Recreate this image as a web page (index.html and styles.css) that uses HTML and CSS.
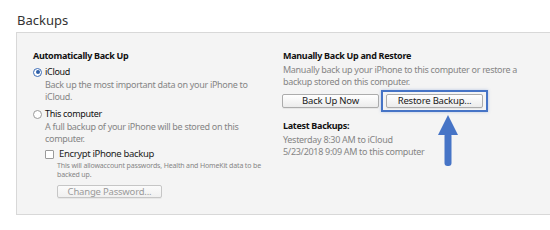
FILE: index.html
```html
<!DOCTYPE html>
<html>
<head>
<meta charset="utf-8">
<link rel="stylesheet" href="styles.css">
</head>
<body>
<div class="page">
  <h1 class="title">Backups</h1>
  <div class="panel">
    <div class="col">
      <div class="heading">Automatically Back Up</div>
      <div class="option"><span class="radio checked"></span><span class="label">iCloud</span></div>
      <p class="desc indent">Back up the most important data on your iPhone to<br>iCloud.</p>
      <div class="option second"><span class="radio"></span><span class="label">This computer</span></div>
      <p class="desc indent">A full backup of your iPhone will be stored on this<br>computer.</p>
      <div class="option check-row"><span class="checkbox"></span><span class="label big">Encrypt iPhone backup</span></div>
      <p class="small">This will allowaccount passwords, Health and HomeKit data to be<br>backed up.</p>
      <button class="btn disabled pw">Change Password...</button>
    </div>
    <div class="col right">
      <div class="heading">Manually Back Up and Restore</div>
      <p class="desc">Manually back up your iPhone to this computer or restore a<br>backup stored on this computer.</p>
      <div class="buttons">
        <button class="btn wide">Back Up Now</button>
        <div class="highlight">
          <button class="btn wide">Restore Backup...</button>
          <svg class="arrow" width="22" height="52" viewBox="0 0 22 52">
            <polygon points="11,0 21,20 1,20" fill="#4674c6"/>
            <rect x="7.5" y="18" width="7" height="33" rx="3" fill="#4674c6"/>
          </svg>
        </div>
      </div>
      <div class="heading latest">Latest Backups:</div>
      <p class="desc">Yesterday 8:30 AM to iCloud<br>5/23/2018 9:09 AM to this computer</p>
    </div>
  </div>
</div>
</body>
</html>
```
FILE: styles.css
```css
html, body {
  margin: 0;
  padding: 0;
  background: #ffffff;
}
.page {
  padding: 10px 14px 0 16px;
  font-family: "Noto Sans", "Open Sans", sans-serif;
  font-size: 9px;
  letter-spacing: -0.3px;
  color: #1a1a1a;
}
.title {
  margin: 0 0 0 1px;
  font-size: 13px;
  font-weight: normal;
  line-height: 20px;
  letter-spacing: 0;
  color: #333;
}
.panel {
  margin-top: 2px;
  width: 518px;
  height: 181px;
  box-sizing: content-box;
  border: 1px solid #d8d8d8;
  background: #f4f4f4;
  display: grid;
  grid-template-columns: 250px 1fr;
  padding: 0 0 0 16px;
}
.col {
  padding-top: 17px;
}
.heading {
  font-weight: bold;
  color: #111;
  line-height: 12px;
}
.option {
  display: flex;
  align-items: center;
  margin-top: 4px;
  line-height: 12px;
  color: #111;
}
.option.second {
  margin-top: 5px;
}
.radio {
  width: 7px;
  height: 7px;
  border: 1px solid #9a9a9a;
  border-radius: 50%;
  background: #fff;
  margin-right: 3px;
  display: flex;
  align-items: center;
  justify-content: center;
  box-sizing: content-box;
}
.radio.checked {
  border-color: #3b6bb5;
}
.radio.checked::after {
  content: "";
  width: 4px;
  height: 4px;
  border-radius: 50%;
  background: #2f5fa8;
}
.desc {
  margin: 1px 0 0 0;
  line-height: 12px;
  color: #858585;
}
.indent {
  margin-left: 12px;
}
.check-row {
  margin-left: 12px;
  margin-top: 3px;
}
.checkbox {
  width: 7px;
  height: 7px;
  border: 1px solid #9a9a9a;
  background: #fff;
  margin-right: 5px;
  border-radius: 1px;
}
.label.big {
  font-size: 9.5px;
  letter-spacing: -0.35px;
  color: #222;
}
.small {
  margin: 1px 0 0 24px;
  font-size: 7px;
  letter-spacing: -0.15px;
  line-height: 9px;
  color: #858585;
}
.btn {
  font-family: inherit;
  font-size: 9.5px;
  letter-spacing: -0.2px;
  color: #1a1a1a;
  background: linear-gradient(#ffffff, #ececec);
  border: 1px solid #acacac;
  border-radius: 2px;
  height: 14px;
  padding: 0;
  line-height: 12px;
  box-shadow: 0 1px 0 rgba(0,0,0,0.05);
}
.btn.disabled {
  color: #9a9a9a;
  border-color: #c6c6c6;
  background: linear-gradient(#fbfbfb, #f0f0f0);
}
.pw {
  display: block;
  margin: 6px 0 0 24px;
  width: 105px;
  height: 13px;
}
.right .desc {
  margin-top: 2px;
}
.buttons {
  display: flex;
  align-items: center;
  margin-top: 1px;
  margin-left: -1px;
  height: 24px;
}
.btn.wide {
  width: 97px;
}
.highlight {
  position: relative;
  margin-left: 2px;
  border: 2px solid #4674c6;
  padding: 2px 3px;
  box-shadow: 0 0 3px rgba(70,116,198,0.35);
  display: flex;
}
.arrow {
  position: absolute;
  left: 54px;
  top: 23px;
}
.latest {
  margin-top: 7px;
}
```
